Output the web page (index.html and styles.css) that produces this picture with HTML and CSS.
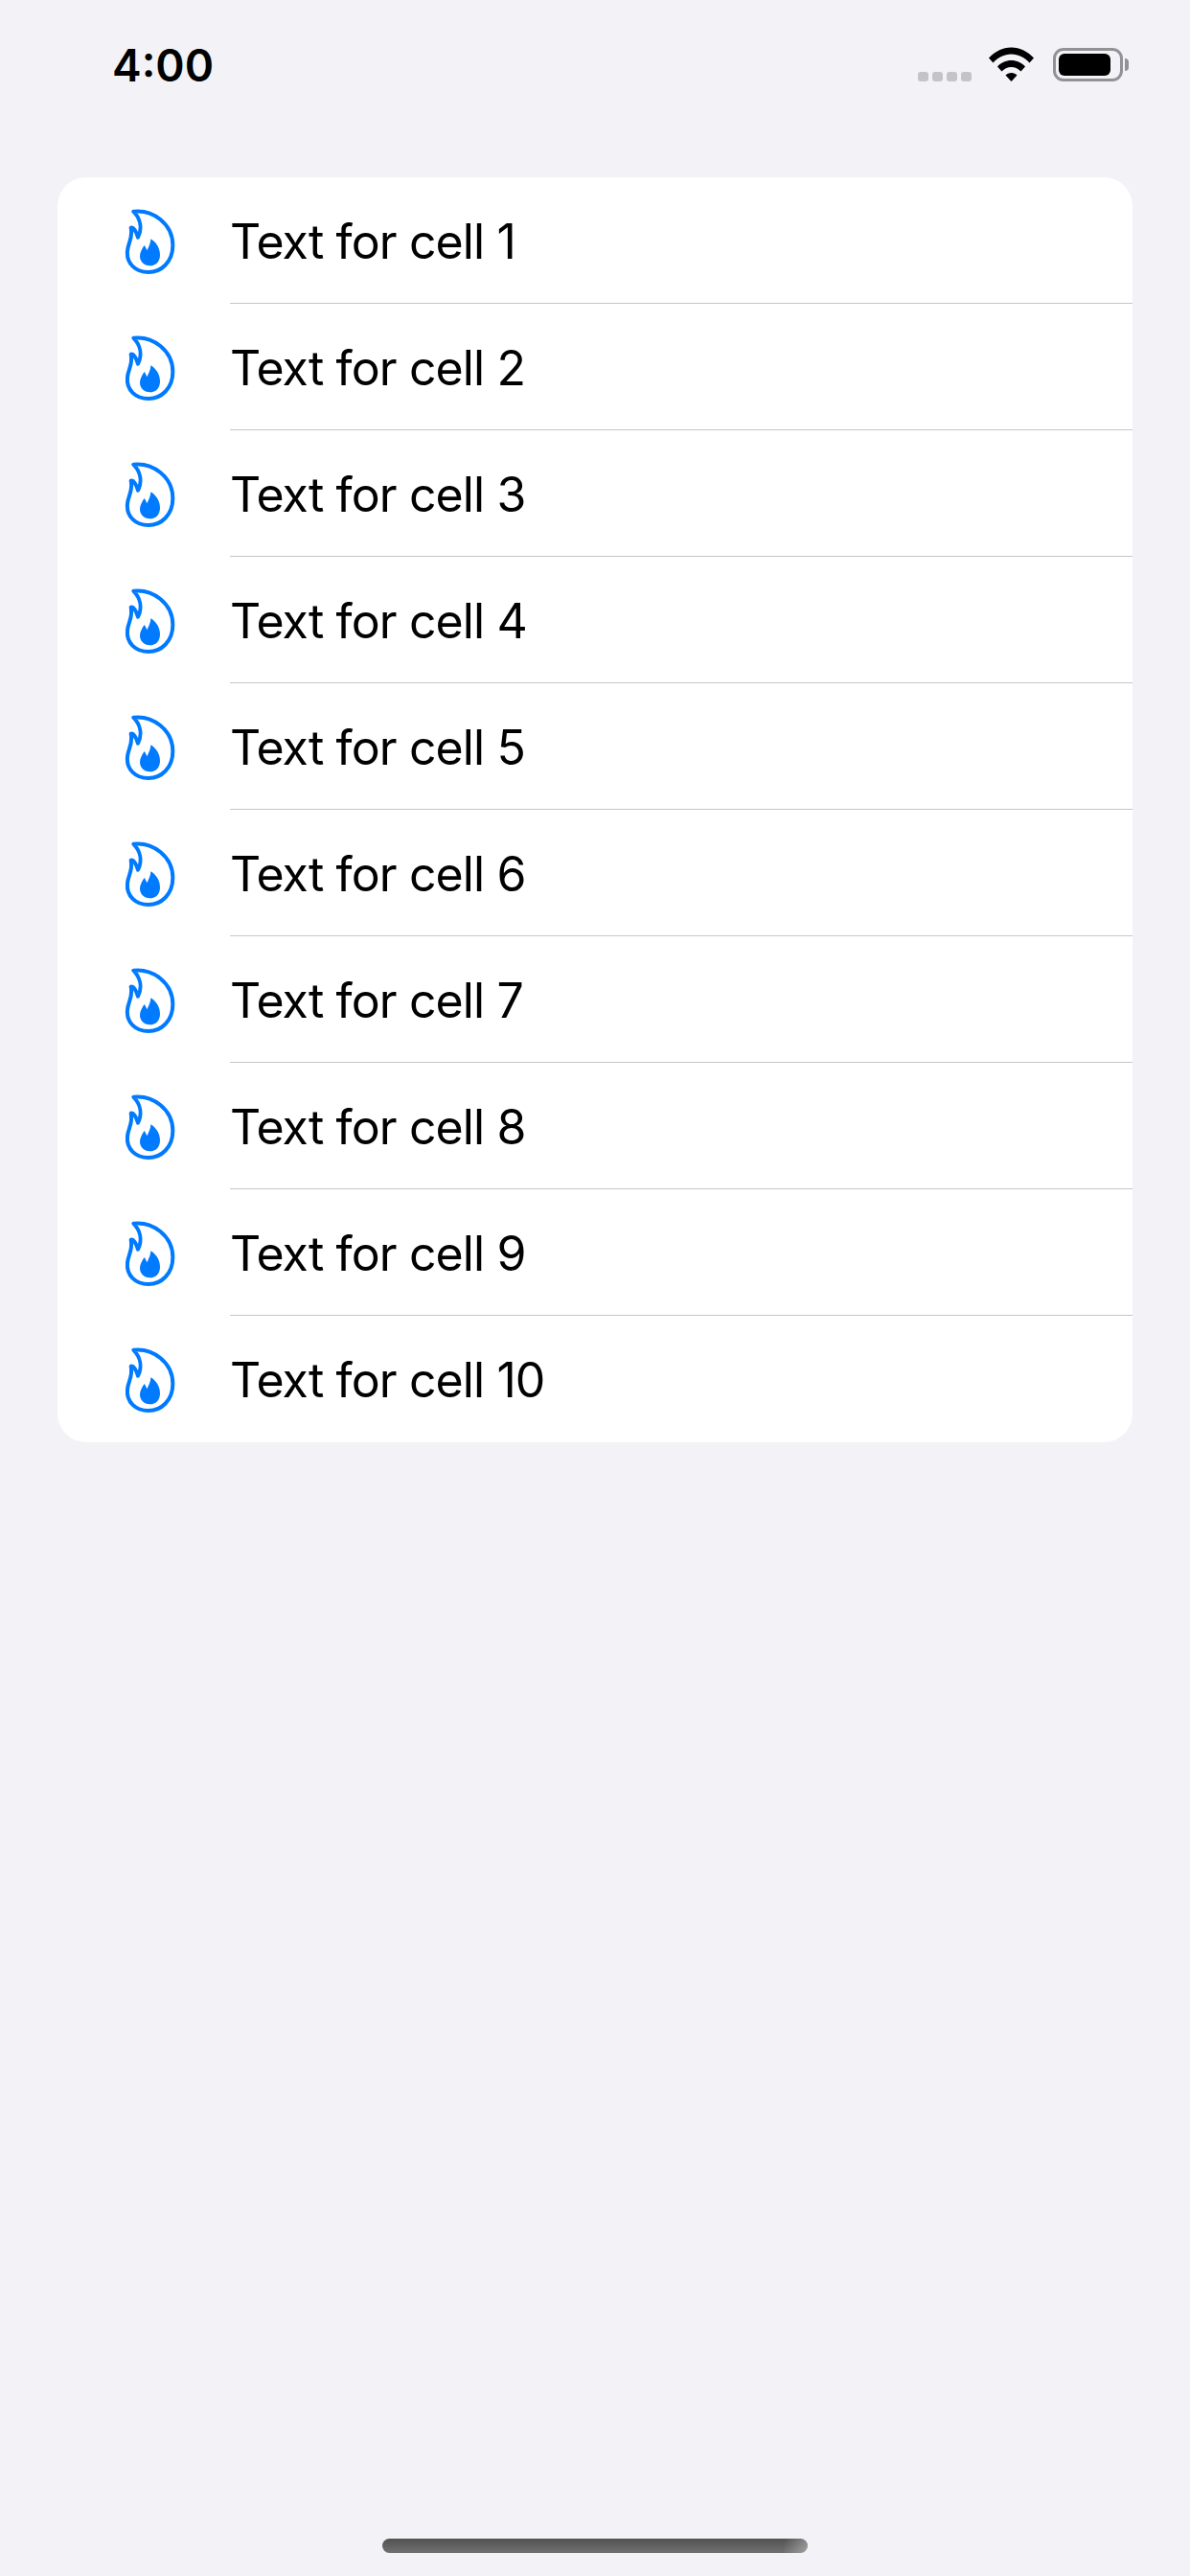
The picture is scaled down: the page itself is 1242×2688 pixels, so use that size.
FILE: index.html
```html
<!DOCTYPE html>
<html lang="en">
<head>
    <meta charset="UTF-8">
    <meta name="viewport" content="width=device-width, initial-scale=1.0">
    <title>Cells</title>
    <link rel="stylesheet" href="styles.css">
</head>
<body>
    <svg class="defs" width="0" height="0">
        <symbol id="flame" viewBox="0 0 300 300">
            <path fill="none" stroke="#007aff" stroke-width="12" stroke-linejoin="round" d="M118 62C178 55 241 100 241 168C241 220 205 252 165 252C125 252 95 225 99 185C101 160 117 145 110 113C118 110 127 125 132 143C146 115 140 85 118 62Z"/>
            <path fill="#007aff" d="M172 148C192 160 201 180 201 198C201 220 187 232 170 232C150 232 138 218 138 202C138 190 145 178 152 168C155 172 158 178 160 184C166 172 172 160 172 148Z"/>
        </symbol>
    </svg>

    <div class="page">
        <header class="status-bar">
            <span class="time">4:00</span>
            <div class="status-icons">
                <div class="signal"><i></i><i></i><i></i><i></i></div>
                <svg class="wifi" viewBox="0 0 47 36">
                    <path d="M0 11.500C6 5 14.500 0.500 23.500 0.500C32.500 0.500 41 5 47 11.500L42.500 16.500C37.500 11 31 7.500 23.500 7.500C16 7.500 9.500 11 4.500 16.500Z"/>
                    <path d="M9 20.500C12.500 16.500 18 14 23.500 14C29 14 34.500 16.500 38 20.500L33.500 25.500C31 23 27.500 21 23.500 21C19.500 21 16 23 13.500 25.500Z"/>
                    <path d="M17.500 29.500C19 28 21 27 23.500 27C26 27 28 28 29.500 29.500L23.500 36Z"/>
                </svg>
                <div class="battery">
                    <div class="battery-body"><div class="battery-level"></div></div>
                    <div class="battery-cap"></div>
                </div>
            </div>
        </header>

        <main class="content">
            <ul class="cell-list">
                <li class="cell"><svg class="cell-icon"><use href="#flame"/></svg><div class="cell-body">Text for cell 1</div></li>
                <li class="cell"><svg class="cell-icon"><use href="#flame"/></svg><div class="cell-body">Text for cell 2</div></li>
                <li class="cell"><svg class="cell-icon"><use href="#flame"/></svg><div class="cell-body">Text for cell 3</div></li>
                <li class="cell"><svg class="cell-icon"><use href="#flame"/></svg><div class="cell-body">Text for cell 4</div></li>
                <li class="cell"><svg class="cell-icon"><use href="#flame"/></svg><div class="cell-body">Text for cell 5</div></li>
                <li class="cell"><svg class="cell-icon"><use href="#flame"/></svg><div class="cell-body">Text for cell 6</div></li>
                <li class="cell"><svg class="cell-icon"><use href="#flame"/></svg><div class="cell-body">Text for cell 7</div></li>
                <li class="cell"><svg class="cell-icon"><use href="#flame"/></svg><div class="cell-body">Text for cell 8</div></li>
                <li class="cell"><svg class="cell-icon"><use href="#flame"/></svg><div class="cell-body">Text for cell 9</div></li>
                <li class="cell"><svg class="cell-icon"><use href="#flame"/></svg><div class="cell-body">Text for cell 10</div></li>
            </ul>
        </main>

        <div class="home-bar"><div class="home-indicator"></div></div>
    </div>
</body>
</html>
```

FILE: styles.css
```css
html, body {
    margin: 0;
    padding: 0;
}
body {
    font-family: Inter, "Liberation Sans", sans-serif;
    background-color: #f2f2f7;
    color: #000;
}
.defs {
    display: block;
}
.page {
    display: flex;
    flex-direction: column;
    width: 1242px;
    height: 2688px;
    overflow: hidden;
}

/* status bar */
.status-bar {
    display: flex;
    justify-content: space-between;
    align-items: flex-start;
    height: 185px;
    padding: 0 64px 0 117px;
    box-sizing: border-box;
}
.time {
    margin-top: 40px;
    font-size: 46px;
    line-height: 56px;
    font-weight: 600;
}
.status-icons {
    display: flex;
    align-items: flex-start;
    margin-top: 49px;
}
.signal {
    display: flex;
    gap: 4px;
    margin-top: 26px;
    margin-right: 18px;
}
.signal i {
    display: block;
    width: 11px;
    height: 10px;
    border-radius: 3px;
    background-color: #c4c4c8;
}
.wifi {
    display: block;
    width: 47px;
    height: 36px;
    margin-right: 20px;
    fill: #000;
}
.battery {
    display: flex;
    align-items: center;
    margin-top: 1px;
}
.battery-body {
    width: 73px;
    height: 35px;
    box-sizing: border-box;
    padding: 3px;
    border: 3px solid #929296;
    border-radius: 11px;
}
.battery-level {
    width: 54px;
    height: 100%;
    border-radius: 6px;
    background-color: #000;
}
.battery-cap {
    width: 4px;
    height: 13px;
    margin-left: 2px;
    border-radius: 0 4px 4px 0;
    background-color: #929296;
}

/* list */
.content {
    flex: 1;
    padding: 0 60px;
}
.cell-list {
    list-style: none;
    margin: 0;
    padding: 0;
    background-color: #fff;
    border-radius: 30px;
    overflow: hidden;
}
.cell {
    display: flex;
    height: 132px;
}
.cell-icon {
    flex: none;
    width: 100px;
    height: 100px;
    margin: 15px 40px 17px 40px;
}
.cell-body {
    flex: 1;
    display: flex;
    align-items: center;
    padding-top: 2px;
    font-size: 50px;
    letter-spacing: -0.9px;
    border-bottom: 1.500px solid #c6c6c8;
}
.cell:last-child .cell-body {
    border-bottom: none;
}

/* home indicator */
.home-bar {
    display: flex;
    justify-content: center;
    padding-bottom: 24px;
}
.home-indicator {
    width: 444px;
    height: 15px;
    border-radius: 8px;
    background: linear-gradient(100deg, transparent 94%, rgba(255, 255, 255, 0.35) 100%), linear-gradient(#525252, #707070);
}
```
